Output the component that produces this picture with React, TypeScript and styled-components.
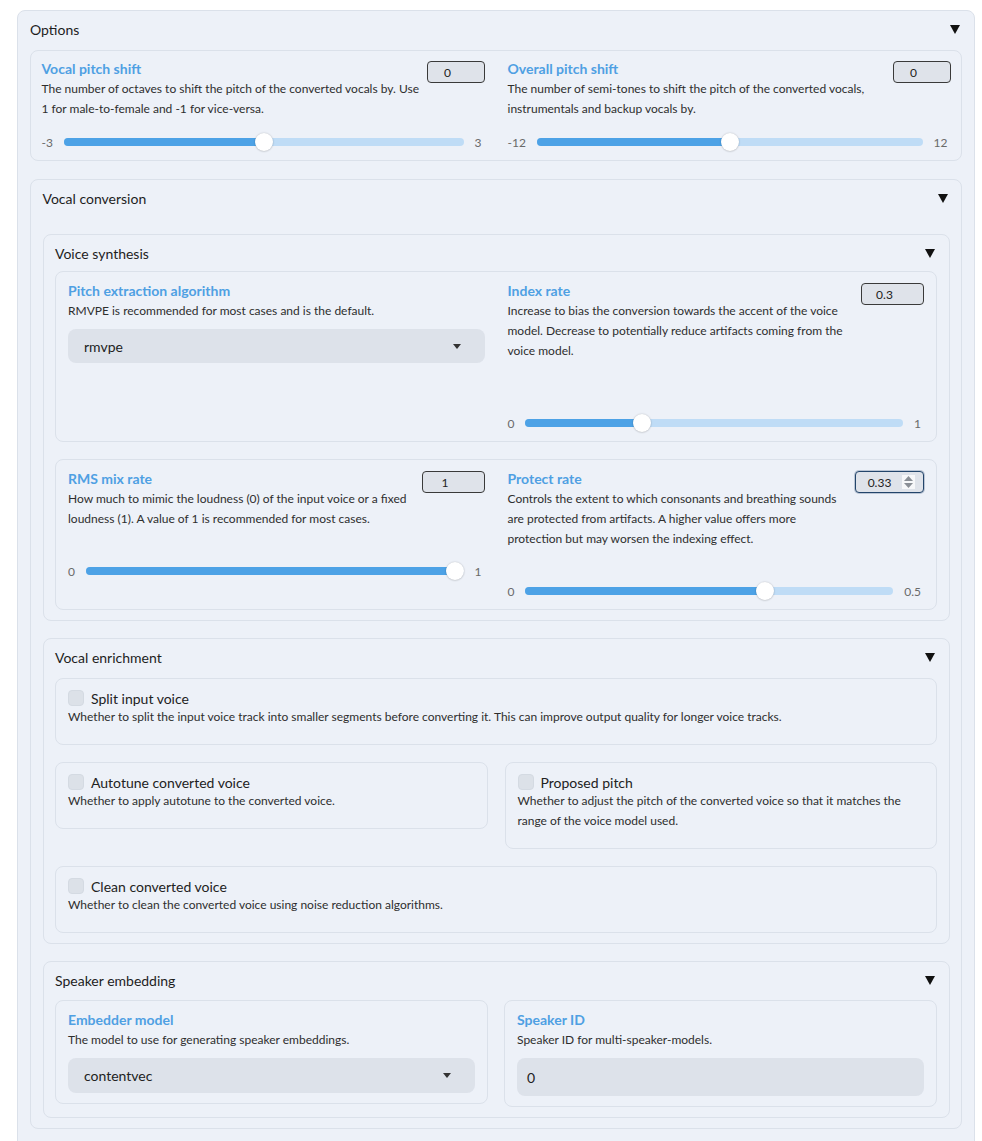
import React from "react";
import styled, { createGlobalStyle } from "styled-components";

const Global = createGlobalStyle`
  html, body { margin: 0; padding: 0; background: #ffffff; }
  body { font-family: Lato, "Noto Sans", sans-serif; color: #2c2c2c; }
  * { box-sizing: border-box; }
`;

const Page = styled.div`
  padding: 10px 7px 0 17px;
`;

const Panel = styled.section<{ $padX?: number; $padB?: number }>`
  background: #edf1f8;
  border: 1px solid #dbe1ea;
  border-radius: 8px;
  padding: 9px ${(p) => p.$padX ?? 11.5}px ${(p) => p.$padB ?? 10}px;
`;

const PanelHeader = styled.div<{ $gap: number }>`
  display: flex;
  align-items: center;
  justify-content: space-between;
  height: 20px;
  padding-bottom: 2px;
  font-size: 14px;
  color: #1d1d1d;
  margin-bottom: ${(p) => p.$gap}px;
`;

const Caret = styled.span`
  width: 0;
  height: 0;
  border-left: 5px solid transparent;
  border-right: 5px solid transparent;
  border-top: 9px solid #111;
  margin-right: 2px;
`;

const PanelBody = styled.div<{ $gap?: number }>`
  display: flex;
  flex-direction: column;
  gap: ${(p) => p.$gap ?? 17}px;
`;

const Block = styled.div<{ $pad?: string }>`
  background: #edf1f8;
  border: 1px solid #dbe1ea;
  border-radius: 8px;
  padding: ${(p) => p.$pad ?? "9px 12px 8px"};
`;

const Cols = styled.div<{ $gap: number }>`
  display: grid;
  grid-template-columns: 1fr 1fr;
  column-gap: ${(p) => p.$gap}px;
  align-items: start;
`;

const Field = styled.div`
  display: flex;
  flex-direction: column;
  min-width: 0;
`;

const FieldHead = styled.div`
  display: flex;
  align-items: flex-start;
  gap: 6px;
`;

const FieldText = styled.div`
  flex: 1;
  min-width: 0;
`;

const Title = styled.div`
  font-size: 14px;
  font-weight: 700;
  line-height: 20px;
  color: #4fa0e3;
`;

const Info = styled.div`
  font-size: 12px;
  line-height: 20px;
  color: #2e2e2e;
`;

const NumBox = styled.div<{ $w: number; $focus?: boolean }>`
  position: relative;
  flex: none;
  width: ${(p) => p.$w}px;
  height: 22px;
  margin-top: 2px;
  border-radius: 4px;
  background: #dfe3ea;
  border: ${(p) => (p.$focus ? "1.5px solid #23456b" : "1px solid #3a3a3a")};
  box-shadow: ${(p) => (p.$focus ? "0 0 0 1px rgba(35,69,107,0.25)" : "none")};
  display: flex;
  align-items: center;
  justify-content: center;
  padding-right: ${(p) => (p.$focus ? 20 : 16)}px;
  font-size: 12px;
  color: #222;
`;

const Spinner = styled.span`
  position: absolute;
  right: 8px;
  top: 3px;
  width: 13px;
  height: 14px;
  background: #f6f7f9;
  display: flex;
  align-items: center;
  justify-content: center;
`;

const SliderRow = styled.div<{ $mt: number }>`
  display: flex;
  align-items: center;
  height: 20px;
  margin-top: ${(p) => p.$mt}px;
  gap: 11px;
  padding-right: 3px;
  font-size: 12px;
  color: #6a6a6a;
`;

const Track = styled.div`
  position: relative;
  flex: 1;
  height: 8px;
  border-radius: 4px;
  background: #bfdcf6;
`;

const Fill = styled.div`
  position: absolute;
  left: 0;
  top: 0;
  bottom: 0;
  border-radius: 4px;
  background: #4da2e6;
`;

const Thumb = styled.div`
  position: absolute;
  top: 50%;
  width: 18px;
  height: 18px;
  margin: -9px 0 0 -9px;
  border-radius: 50%;
  background: #ffffff;
  box-shadow: 0 0 2px rgba(0, 0, 0, 0.22), 0 1px 2px rgba(0, 0, 0, 0.08);
`;

const Dropdown = styled.div<{ $h?: number }>`
  margin-top: 8px;
  height: ${(p) => p.$h ?? 34}px;
  border-radius: 8px;
  background: #dde2ea;
  display: flex;
  align-items: center;
  justify-content: space-between;
  padding: 0 24px 0 16px;
  font-size: 14px;
  color: #222;
`;

const TextBox = styled.div`
  margin-top: 8px;
  height: 38px;
  border-radius: 8px;
  background: #dde2ea;
  display: flex;
  align-items: center;
  padding: 0 10px;
  font-size: 14px;
  color: #222;
`;

const CheckRow = styled.label`
  display: flex;
  align-items: center;
  gap: 7px;
  height: 18px;
  font-size: 14px;
  color: #222;
`;

const Box = styled.span`
  width: 16px;
  height: 16px;
  border-radius: 4px;
  background: #dce1e8;
  border: 1px solid #d4dae2;
`;

function DownCaret() {
  return (
    <svg width="8" height="5" viewBox="0 0 8 5">
      <path d="M0 0 L8 0 L4 5 Z" fill="#333" />
    </svg>
  );
}

type SliderProps = {
  title: string;
  info: string;
  value: string;
  min: string;
  max: string;
  pct: number;
  boxW: number;
  mt: number;
  focus?: boolean;
};

function SliderField({ title, info, value, min, max, pct, boxW, mt, focus }: SliderProps) {
  return (
    <Field>
      <FieldHead>
        <FieldText>
          <Title>{title}</Title>
          <Info>{info}</Info>
        </FieldText>
        <NumBox $w={boxW} $focus={focus}>
          {value}
          {focus && (
            <Spinner>
              <svg width="9" height="12" viewBox="0 0 9 12">
                <path d="M4.5 0 L9 5 L0 5 Z" fill="#8a8f96" />
                <path d="M0 7 L9 7 L4.5 12 Z" fill="#8a8f96" />
              </svg>
            </Spinner>
          )}
        </NumBox>
      </FieldHead>
      <SliderRow $mt={mt}>
        <span>{min}</span>
        <Track>
          <Fill style={{ width: `calc(9px + (100% - 18px) * ${pct})` }} />
          <Thumb style={{ left: `calc(9px + (100% - 18px) * ${pct})` }} />
        </Track>
        <span>{max}</span>
      </SliderRow>
    </Field>
  );
}

function CheckField({ label, info }: { label: string; info: string }) {
  return (
    <Block $pad="10px 12px 17px">
      <CheckRow>
        <Box />
        {label}
      </CheckRow>
      <Info>{info}</Info>
    </Block>
  );
}

export default function App() {
  return (
    <>
      <Global />
      <Page>
        <Panel $padX={12} $padB={24}>
          <PanelHeader $gap={10}>
            <span>Options</span>
            <Caret />
          </PanelHeader>
          <PanelBody $gap={18}>
            <Block $pad="8px 10.5px 8px">
              <Cols $gap={23}>
                <SliderField
                  title="Vocal pitch shift"
                  info="The number of octaves to shift the pitch of the converted vocals by. Use 1 for male-to-female and -1 for vice-versa."
                  value="0"
                  min="-3"
                  max="3"
                  pct={0.5}
                  boxW={58}
                  mt={13}
                />
                <SliderField
                  title="Overall pitch shift"
                  info="The number of semi-tones to shift the pitch of the converted vocals, instrumentals and backup vocals by."
                  value="0"
                  min="-12"
                  max="12"
                  pct={0.5}
                  boxW={58}
                  mt={13}
                />
              </Cols>
            </Block>

            <Panel>
              <PanelHeader $gap={25}>
                <span>Vocal conversion</span>
                <Caret />
              </PanelHeader>
              <PanelBody>
                <Panel>
                  <PanelHeader $gap={7}>
                    <span>Voice synthesis</span>
                    <Caret />
                  </PanelHeader>
                  <PanelBody>
                    <Block>
                      <Cols $gap={23}>
                        <Field>
                          <Title>Pitch extraction algorithm</Title>
                          <Info>RMVPE is recommended for most cases and is the default.</Info>
                          <Dropdown>
                            <span>rmvpe</span>
                            <DownCaret />
                          </Dropdown>
                        </Field>
                        <SliderField
                          title="Index rate"
                          info="Increase to bias the conversion towards the accent of the voice model. Decrease to potentially reduce artifacts coming from the voice model."
                          value="0.3"
                          min="0"
                          max="1"
                          pct={0.3}
                          boxW={63}
                          mt={52}
                        />
                      </Cols>
                    </Block>
                    <Block>
                      <Cols $gap={23}>
                        <SliderField
                          title="RMS mix rate"
                          info="How much to mimic the loudness (0) of the input voice or a fixed loudness (1). A value of 1 is recommended for most cases."
                          value="1"
                          min="0"
                          max="1"
                          pct={1}
                          boxW={63}
                          mt={32}
                        />
                        <SliderField
                          title="Protect rate"
                          info="Controls the extent to which consonants and breathing sounds are protected from artifacts. A higher value offers more protection but may worsen the indexing effect."
                          value="0.33"
                          min="0"
                          max="0.5"
                          pct={0.66}
                          boxW={69}
                          mt={32}
                          focus
                        />
                      </Cols>
                    </Block>
                  </PanelBody>
                </Panel>

                <Panel>
                  <PanelHeader $gap={10}>
                    <span>Vocal enrichment</span>
                    <Caret />
                  </PanelHeader>
                  <PanelBody>
                    <CheckField
                      label="Split input voice"
                      info="Whether to split the input voice track into smaller segments before converting it. This can improve output quality for longer voice tracks."
                    />
                    <Cols $gap={17}>
                      <CheckField
                        label="Autotune converted voice"
                        info="Whether to apply autotune to the converted voice."
                      />
                      <CheckField
                        label="Proposed pitch"
                        info="Whether to adjust the pitch of the converted voice so that it matches the range of the voice model used."
                      />
                    </Cols>
                    <CheckField
                      label="Clean converted voice"
                      info="Whether to clean the converted voice using noise reduction algorithms."
                    />
                  </PanelBody>
                </Panel>

                <Panel>
                  <PanelHeader $gap={9}>
                    <span>Speaker embedding</span>
                    <Caret />
                  </PanelHeader>
                  <Cols $gap={16}>
                    <Block $pad="9px 12px 10px">
                      <Field>
                        <Title>Embedder model</Title>
                        <Info>The model to use for generating speaker embeddings.</Info>
                        <Dropdown $h={35}>
                          <span>contentvec</span>
                          <DownCaret />
                        </Dropdown>
                      </Field>
                    </Block>
                    <Block $pad="9px 12px 10px">
                      <Field>
                        <Title>Speaker ID</Title>
                        <Info>Speaker ID for multi-speaker-models.</Info>
                        <TextBox>0</TextBox>
                      </Field>
                    </Block>
                  </Cols>
                </Panel>
              </PanelBody>
            </Panel>
          </PanelBody>
        </Panel>
      </Page>
    </>
  );
}
